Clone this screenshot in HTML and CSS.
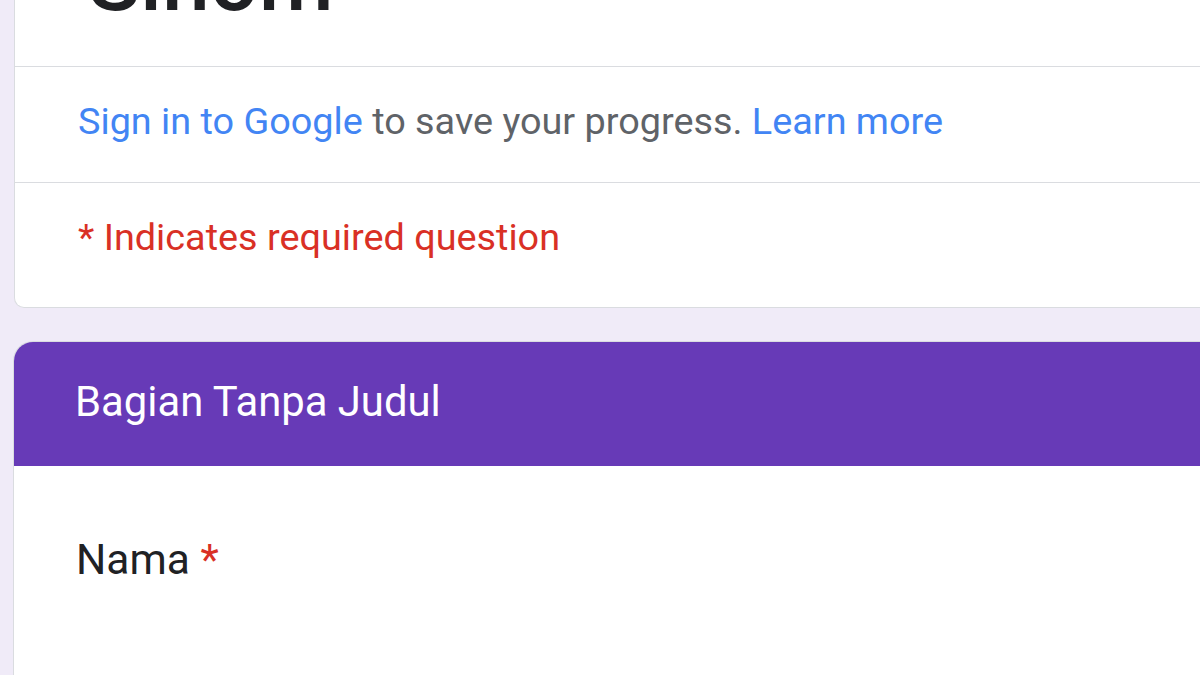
FILE: index.html
```html
<!DOCTYPE html>
<html lang="id">
<head>
<meta charset="utf-8">
<title>Sinom</title>
<link rel="stylesheet" href="styles.css">
</head>
<body>
<div class="page">
  <div class="card card-head">
    <div class="title-wrap"><div class="title">Sinom</div></div>
    <div class="row signin"><a class="link" href="#">Sign in to Google</a> to save your progress. <a class="link" href="#">Learn more</a></div>
    <div class="row required">* Indicates required question</div>
  </div>
  <div class="card card-section">
    <div class="section-header">Bagian Tanpa Judul</div>
    <div class="question">
      <div class="q-title">Nama <span class="star">*</span></div>
    </div>
  </div>
</div>
</body>
</html>
```
FILE: styles.css
```css
html, body {
  margin: 0;
  padding: 0;
  background: #f0ebf8;
  overflow: hidden;
}
body {
  font-family: Roboto, "Noto Sans", Arial, sans-serif;
  width: 1200px;
  height: 675px;
}
.page {
  padding-left: 14px;
  width: 1400px;
  display: flex;
  flex-direction: column;
  gap: 33px;
}
.card {
  background: #fff;
  border: 1px solid #dadce0;
}
.card-head {
  border-radius: 0 0 10px 10px;
  border-top: none;
}
.title-wrap {
  height: 66px;
  overflow: hidden;
  position: relative;
  border-bottom: 1px solid #dadce0;
}
.title {
  position: absolute;
  left: 73px;
  bottom: 42px;
  font-size: 86px;
  line-height: 86px;
  font-weight: 500;
  color: #202124;
}
.row {
  box-sizing: border-box;
  padding-left: 63px;
  font-size: 37.8px;
  display: flex;
  align-items: center;
  white-space: pre;
}
.signin {
  height: 116px;
  color: #5f6368;
  border-bottom: 1px solid #dadce0;
  padding-bottom: 8px;
}
.link {
  color: #4285f4;
  text-decoration: none;
}
.required {
  height: 124px;
  color: #d93025;
  padding-bottom: 16px;
}
.card-section {
  border-radius: 20px 20px 0 0;
  border-bottom: none;
  overflow: hidden;
  margin-left: -1px;
}
.section-header {
  background: #673ab7;
  color: #fff;
  height: 125px;
  margin: -1px 0 0 -1px;
  box-sizing: border-box;
  padding: 0 0 4px 62px;
  display: flex;
  align-items: center;
  font-size: 41.8px;
}
.question {
  background: #fff;
  height: 300px;
  box-sizing: border-box;
  padding: 69px 0 0 62px;
}
.q-title {
  font-size: 42.5px;
  color: #202124;
}
.star {
  color: #d93025;
}
```
